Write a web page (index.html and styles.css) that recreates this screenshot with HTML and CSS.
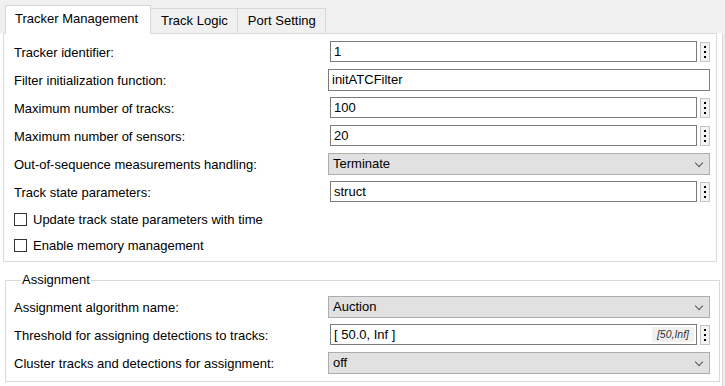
FILE: index.html
```html
<!DOCTYPE html>
<html lang="en">
<head>
  <meta charset="UTF-8">
  <title>Tracker Block Parameters</title>
  <link rel="stylesheet" href="styles.css">
</head>
<body>
  <div class="tabs">
    <div class="tab active">Tracker Management</div>
    <div class="tab">Track Logic</div>
    <div class="tab">Port Setting</div>
  </div>

  <div class="content">
    <div class="panel">
      <div class="row">
        <label>Tracker identifier:</label>
        <div class="field"><div class="input">1</div><div class="dots"><i></i><i></i><i></i></div></div>
      </div>
      <div class="row">
        <label>Filter initialization function:</label>
        <div class="input wide">initATCFilter</div>
      </div>
      <div class="row">
        <label>Maximum number of tracks:</label>
        <div class="field"><div class="input">100</div><div class="dots"><i></i><i></i><i></i></div></div>
      </div>
      <div class="row">
        <label>Maximum number of sensors:</label>
        <div class="field"><div class="input">20</div><div class="dots"><i></i><i></i><i></i></div></div>
      </div>
      <div class="row">
        <label>Out-of-sequence measurements handling:</label>
        <div class="select">Terminate<span class="chev"></span></div>
      </div>
      <div class="row">
        <label>Track state parameters:</label>
        <div class="field"><div class="input">struct</div><div class="dots"><i></i><i></i><i></i></div></div>
      </div>
      <div class="check"><span class="box"></span>Update track state parameters with time</div>
      <div class="check"><span class="box"></span>Enable memory management</div>
    </div>

    <fieldset class="group">
      <legend>Assignment</legend>
      <div class="row">
        <label>Assignment algorithm name:</label>
        <div class="select">Auction<span class="chev"></span></div>
      </div>
      <div class="row">
        <label>Threshold for assigning detections to tracks:</label>
        <div class="field"><div class="input">[ 50.0, Inf ]<span class="hint">[50,Inf]</span></div><div class="dots"><i></i><i></i><i></i></div></div>
      </div>
      <div class="row">
        <label>Cluster tracks and detections for assignment:</label>
        <div class="select">off<span class="chev"></span></div>
      </div>
    </fieldset>
  </div>
</body>
</html>
```

FILE: styles.css
```css
body {
  margin: 0;
  font-family: 'Liberation Sans', Arial, sans-serif;
  font-size: 13px;
  color: #000;
  background-color: #f0f0f0;
  height: 386px;
  overflow: hidden;
}
.tabs {
  display: flex;
  align-items: flex-end;
  height: 33px;
  padding-left: 5px;
}
.tab {
  height: 25px;
  line-height: 23px;
  padding: 0 9px 0 10px;
  border: 1px solid #d9d9d9;
  border-bottom: none;
  border-left: none;
  background-color: #f0f0f0;
  box-sizing: border-box;
}
.tab.active {
  height: 29px;
  line-height: 26px;
  padding: 0 12px 0 9px;
  background: white;
  border-left: 1px solid #d9d9d9;
  margin-bottom: -1px;
  position: relative;
}
.content {
  background: white;
  height: 353px;
  margin-right: 2px;
  border-right: 1px solid #d9d9d9;
  padding-left: 3px;
}
.panel {
  border: 1px solid #d9d9d9;
  width: 714px;
  box-sizing: border-box;
  padding: 7px 9px 6px 10px;
  display: flex;
  flex-direction: column;
  gap: 6px;
}
.row {
  display: grid;
  grid-template-columns: 314px 382px;
  height: 22px;
  align-items: center;
}
.field {
  display: flex;
  gap: 3px;
  padding-left: 2px;
  height: 100%;
}
.input {
  flex: 1;
  border: 1px solid #7a7a7a;
  height: 21px;
  box-sizing: border-box;
  padding-left: 3px;
  line-height: 19px;
  position: relative;
}
.input.wide {
  height: 22px;
  line-height: 20px;
}
.hint {
  position: absolute;
  right: 2px;
  top: 2px;
  bottom: 2px;
  padding: 0 5px;
  font-size: 10.5px;
  font-style: italic;
  line-height: 15px;
  color: #333;
  background-color: #f0f0f0;
}
.dots {
  width: 10px;
  height: 20px;
  margin-top: 1px;
  border: 1px solid #c4c4c4;
  background-color: #f3f3f3;
  box-sizing: border-box;
  display: flex;
  flex-direction: column;
  align-items: center;
  justify-content: center;
  gap: 3px;
}
.dots i {
  display: block;
  flex: none;
  width: 2px;
  height: 2px;
  background: #000;
}
.select {
  height: 22px;
  box-sizing: border-box;
  border: 1px solid #adadad;
  background-color: #e1e1e1;
  padding-left: 4px;
  line-height: 20px;
  position: relative;
}
.chev {
  position: absolute;
  right: 7px;
  top: 6px;
  width: 5px;
  height: 5px;
  border-right: 1px solid #555;
  border-bottom: 1px solid #555;
  transform: rotate(45deg);
}
.check {
  display: flex;
  align-items: center;
  height: 20px;
}
.box {
  width: 13px;
  height: 13px;
  box-sizing: border-box;
  border: 1px solid #333;
  margin-right: 6px;
}
.group {
  margin: 11px 0 0 2px;
  width: 714px;
  box-sizing: border-box;
  border: 1px solid #d9d9d9;
  padding: 9px 9px 7px 8px;
  display: flex;
  flex-direction: column;
  gap: 6px;
}
.group legend {
  padding: 0 1px;
  margin-left: 7px;
  line-height: 14px;
}
```
